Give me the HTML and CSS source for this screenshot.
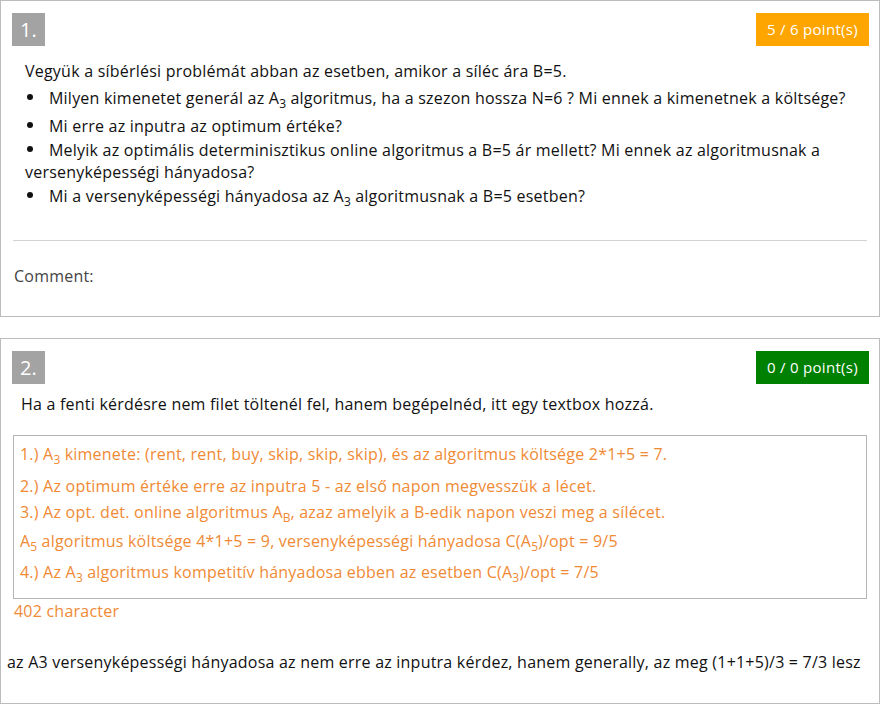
FILE: index.html
```html
<!DOCTYPE html>
<html lang="hu">
<head>
<meta charset="utf-8">
<title>Quiz</title>
<link rel="stylesheet" href="styles.css">
</head>
<body>
<div class="card card-1">
  <div class="card-head">
    <span class="num">1.</span>
    <span class="points points-partial">5 / 6 point(s)</span>
  </div>
  <div class="question">
    <p class="q-intro">Vegyük a síbérlési problémát abban az esetben, amikor a síléc ára B=5.</p>
    <p class="q-item g5">Milyen kimenetet generál az A<sub>3</sub> algoritmus, ha a szezon hossza N=6 ? Mi ennek a kimenetnek a költsége?</p>
    <p class="q-item g6">Mi erre az inputra az optimum értéke?</p>
    <p class="q-item g2">Melyik az optimális determinisztikus online algoritmus a B=5 ár mellett? Mi ennek az algoritmusnak a versenyképességi hányadosa?</p>
    <p class="q-item g2">Mi a versenyképességi hányadosa az A<sub>3</sub> algoritmusnak a B=5 esetben?</p>
  </div>
  <hr class="sep">
  <div class="comment">Comment:</div>
</div>

<div class="card card-2">
  <div class="card-head">
    <span class="num">2.</span>
    <span class="points points-full">0 / 0 point(s)</span>
  </div>
  <p class="prompt">Ha a fenti kérdésre nem filet töltenél fel, hanem begépelnéd, itt egy textbox hozzá.</p>
  <div class="answer">
    <p class="a-line">1.) A<sub>3</sub> kimenete: (rent, rent, buy, skip, skip, skip), és az algoritmus költsége 2*1+5 = 7.</p>
    <p class="a-line g10">2.) Az optimum értéke erre az inputra 5 - az első napon megvesszük a lécet.</p>
    <p class="a-line g4">3.) Az opt. det. online algoritmus A<sub>B</sub>, azaz amelyik a B-edik napon veszi meg a sílécet.</p>
    <p class="a-line g7">A<sub>5</sub> algoritmus költsége 4*1+5 = 9, versenyképességi hányadosa C(A<sub>5</sub>)/opt = 9/5</p>
    <p class="a-line g9">4.) Az A<sub>3</sub> algoritmus kompetitív hányadosa ebben az esetben C(A<sub>3</sub>)/opt = 7/5</p>
  </div>
  <div class="count">402 character</div>
  <p class="feedback">az A3 versenyképességi hányadosa az nem erre az inputra kérdez, hanem generally, az meg (1+1+5)/3 = 7/3 lesz</p>
</div>
</body>
</html>
```

FILE: styles.css
```css
* { box-sizing: border-box; }

html, body {
  margin: 0;
  padding: 0;
  background: #fff;
}

body {
  font-family: "Open Sans", "Liberation Sans", sans-serif;
  font-size: 16px;
  line-height: 22px;
  letter-spacing: 0.22px;
  color: #111;
}

p { margin: 0; }

sub {
  font-size: 12px;
  line-height: 0;
  vertical-align: -4px;
  letter-spacing: 0;
}

.card {
  border: 1px solid #bcbcbc;
  padding-top: 12px;
}

.card-1 {
  height: 317px;
}

.card-2 {
  margin-top: 21px;
  height: 366px;
}

.card-head {
  display: flex;
  justify-content: space-between;
  align-items: center;
  padding: 0 10px 0 11px;
}

.num {
  width: 33px;
  height: 33px;
  background: #a3a3a3;
  color: #fff;
  font-size: 20px;
  line-height: 33px;
  text-align: center;
}

.points {
  height: 33px;
  padding: 0 11px;
  color: #fff;
  font-size: 15px;
  line-height: 33px;
  letter-spacing: 0.3px;
}

.points-partial { background: #ffa500; }
.points-full { background: #008000; }

.question {
  margin: 14px 0 0 24px;
  padding-right: 20px;
}

.q-item::before {
  content: "";
  display: inline-block;
  width: 6px;
  height: 6px;
  border-radius: 50%;
  background: #111;
  margin: 0 16px 0 2px;
  vertical-align: 4px;
}

.g2 { margin-top: 2px; }
.g4 { margin-top: 4px; }
.g5 { margin-top: 5px; }
.g6 { margin-top: 6px; }
.g7 { margin-top: 7px; }
.g9 { margin-top: 9px; }
.g10 { margin-top: 10px; }

.sep {
  margin: 33px 12px 0 12px;
  border: 0;
  border-top: 1px solid #d2d2d2;
  height: 0;
}

.comment {
  margin: 24px 0 0 13px;
  color: #444;
}

.prompt {
  margin: 9px 0 0 20px;
}

.answer {
  margin: 20px 12px 0 12px;
  height: 164px;
  border: 1px solid #b5b5b5;
  padding: 7px 6px 0 6px;
  color: #f08a35;
}

.count {
  margin: 1px 0 0 13px;
  color: #f08a35;
}

.feedback {
  margin: 29px 0 0 6px;
}
```
